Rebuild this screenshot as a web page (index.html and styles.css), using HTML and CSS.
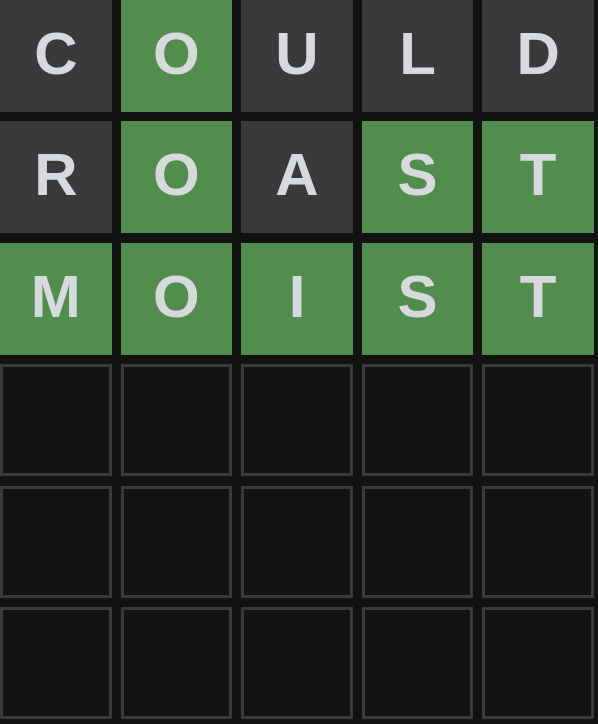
FILE: index.html
```html
<!DOCTYPE html>
<html>
<head>
<meta charset="utf-8">
<link rel="stylesheet" href="styles.css">
</head>
<body>
<div class="board">
  <div class="tile absent">C</div>
  <div class="tile correct">O</div>
  <div class="tile absent">U</div>
  <div class="tile absent">L</div>
  <div class="tile absent">D</div>

  <div class="tile absent">R</div>
  <div class="tile correct">O</div>
  <div class="tile absent">A</div>
  <div class="tile correct">S</div>
  <div class="tile correct">T</div>

  <div class="tile correct">M</div>
  <div class="tile correct">O</div>
  <div class="tile correct">I</div>
  <div class="tile correct">S</div>
  <div class="tile correct">T</div>

  <div class="tile empty"></div>
  <div class="tile empty"></div>
  <div class="tile empty"></div>
  <div class="tile empty"></div>
  <div class="tile empty"></div>

  <div class="tile empty"></div>
  <div class="tile empty"></div>
  <div class="tile empty"></div>
  <div class="tile empty"></div>
  <div class="tile empty"></div>

  <div class="tile empty"></div>
  <div class="tile empty"></div>
  <div class="tile empty"></div>
  <div class="tile empty"></div>
  <div class="tile empty"></div>
</div>
</body>
</html>
```
FILE: styles.css
```css
html, body {
  margin: 0;
  padding: 0;
  background: #121213;
}
.board {
  display: grid;
  grid-template-columns: repeat(5, 111.6px);
  grid-template-rows: repeat(6, 112px);
  column-gap: 9px;
  row-gap: 9.4px;
  width: 594px;
}
.tile {
  box-sizing: border-box;
  display: flex;
  align-items: center;
  justify-content: center;
  font-family: "Liberation Sans", Arial, sans-serif;
  font-weight: bold;
  font-size: 60px;
  color: #d7dadc;
  padding-bottom: 5px;
}
.absent {
  background: #3a3a3c;
}
.correct {
  background: #538d4e;
}
.empty {
  background: #121213;
  border: 3px solid #3a3a3c;
}
```
